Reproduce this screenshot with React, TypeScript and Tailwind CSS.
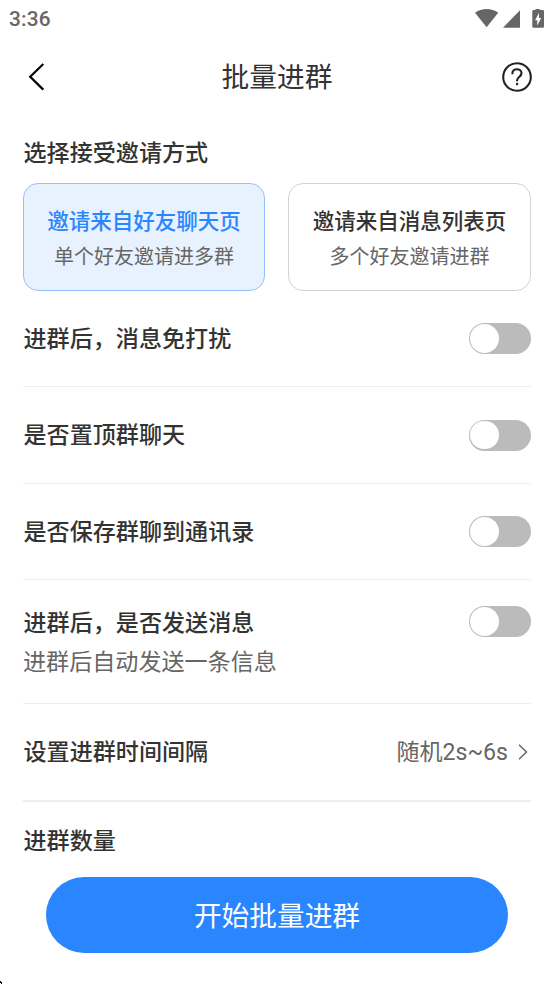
import { useState } from "react";

type Mode = { title: string; hint: string };

const modes: Mode[] = [
  { title: "邀请来自好友聊天页", hint: "单个好友邀请进多群" },
  { title: "邀请来自消息列表页", hint: "多个好友邀请进群" },
];

function StatusBar() {
  return (
    <div className="flex h-[38px] items-center justify-between pl-[9px] pr-[9px] text-[#666666]">
      <span className="pt-px font-[Roboto] text-[20.8px] font-medium leading-none tracking-[0.2px]">3:36</span>
      <svg width="70" height="20" viewBox="0 0 70 20" fill="currentColor">
        <path d="M0 3.7C6.7-1.2 16.5-1.2 23.2 3.7L11.6 18.2z" />
        <path d="M28 18.8L45 1.2V18.8z" />
        <path
          fillRule="evenodd"
          d="M60.5 -.6h4.2v1.6h3.1q1.2 0 1.2 1.2v15.4q0 1.2-1.2 1.2h-9.3q-1.2 0-1.2-1.2V2.2q0-1.2 1.2-1.2h2zM64 4l-4 7.3h2.2v5.2l4-7.6H64z"
        />
      </svg>
    </div>
  );
}

function Header() {
  return (
    <header className="flex h-[78px] items-center justify-between px-[22px]">
      <svg width="30" height="28" viewBox="-6 0 30 28" fill="none" stroke="#000000" strokeWidth="2.2">
        <path d="M15.3 1L2.2 13.8l13.1 12.8" />
      </svg>
      <h1 className="pt-[2px] text-[27.7px] leading-none text-[#333333]">批量进群</h1>
      <svg width="30" height="30" viewBox="0 0 30 30" fill="none" stroke="#222222" strokeWidth="2.1">
        <circle cx="15" cy="15" r="13.8" />
        <path d="M10.4 12.2v-.8c0-2.5 1.9-4.2 4.5-4.2s4.6 1.7 4.6 4c0 3.4-4.4 4-4.4 7v1" />
        <path d="M15.1 20.8v2.4" />
      </svg>
    </header>
  );
}

function ModeCard({ mode, active, onSelect }: { mode: Mode; active: boolean; onSelect: () => void }) {
  return (
    <button
      onClick={onSelect}
      className={`flex h-[108px] flex-col items-center rounded-[15px] border pt-[25px] ${
        active ? "border-[#92c0ff] bg-[#e8f2ff]" : "border-[#d2d2d2] bg-white"
      }`}
    >
      <span className={`text-[21.5px] font-medium leading-[26px] ${active ? "text-[#2a86ff]" : "text-[#333333]"}`}>
        {mode.title}
      </span>
      <span className="mt-[9px] text-[20px] leading-[26px] text-[#666666]">{mode.hint}</span>
    </button>
  );
}

function Toggle() {
  const [on, setOn] = useState(false);
  return (
    <button
      role="switch"
      aria-checked={on}
      onClick={() => setOn(!on)}
      className={`flex h-[31px] w-[62px] shrink-0 items-center rounded-full px-px ${
        on ? "justify-end bg-[#2a86ff]" : "bg-[#bbbbbb]"
      }`}
    >
      <span className="size-[28.5px] rounded-full bg-white" />
    </button>
  );
}

function Label({ children }: { children: string }) {
  return <span className="pt-[2px] pl-[0.5px] text-[23.08px] font-medium leading-[32px] text-[#333333]">{children}</span>;
}

export default function App() {
  const [selected, setSelected] = useState(0);

  return (
    <div
      lang="zh-CN"
      className="flex h-[984px] w-[554px] flex-col overflow-hidden bg-white font-[Roboto,'Noto_Sans_CJK_SC',sans-serif]"
    >
      <StatusBar />
      <Header />
      <main className="flex flex-col px-[23px] pt-[20px]">
        <Label>选择接受邀请方式</Label>
        <div className="mt-[13px] grid grid-cols-[242px_243px] gap-[23px]">
          {modes.map((mode, i) => (
            <ModeCard key={mode.title} mode={mode} active={i === selected} onSelect={() => setSelected(i)} />
          ))}
        </div>

        <div className="flex h-[96px] items-center justify-between border-b border-[#eeeeee]">
          <Label>进群后，消息免打扰</Label>
          <Toggle />
        </div>
        <div className="flex h-[97px] items-center justify-between border-b border-[#eeeeee]">
          <Label>是否置顶群聊天</Label>
          <Toggle />
        </div>
        <div className="flex h-[96px] items-center justify-between border-b border-[#eeeeee]">
          <Label>是否保存群聊到通讯录</Label>
          <Toggle />
        </div>
        <div className="flex h-[124px] flex-col border-b border-[#eeeeee] pt-[26px]">
          <div className="flex h-[31px] items-start justify-between">
            <Label>进群后，是否发送消息</Label>
            <Toggle />
          </div>
          <p className="mt-[10px] text-[23.08px] leading-[32px] text-[#666666]">进群后自动发送一条信息</p>
        </div>
        <div className="flex h-[98px] items-center justify-between border-b-2 border-[#eeeeee]">
          <Label>设置进群时间间隔</Label>
          <div className="flex items-center gap-[10px] pr-[3px]">
            <span className="pt-[2px] text-[23.08px] leading-[32px] text-[#666666]">随机2s~6s</span>
            <svg width="10" height="16" viewBox="0 0 10 16" fill="none" stroke="#666666" strokeWidth="1.5">
              <path d="M1 .8L8.5 8 1 15.2" />
            </svg>
          </div>
        </div>
        <div className="mt-[22px] flex">
          <Label>进群数量</Label>
        </div>
      </main>
      <button className="mx-[46px] mt-[19px] h-[76px] rounded-full bg-[#2a86ff] pt-[3px] text-[27.7px] leading-none text-white">
        开始批量进群
      </button>
      <svg className="mt-auto" width="3" height="3" viewBox="0 0 3 3" fill="#000000">
        <path d="M0 0h1v1h1v2H1V2H0z" />
      </svg>
    </div>
  );
}
